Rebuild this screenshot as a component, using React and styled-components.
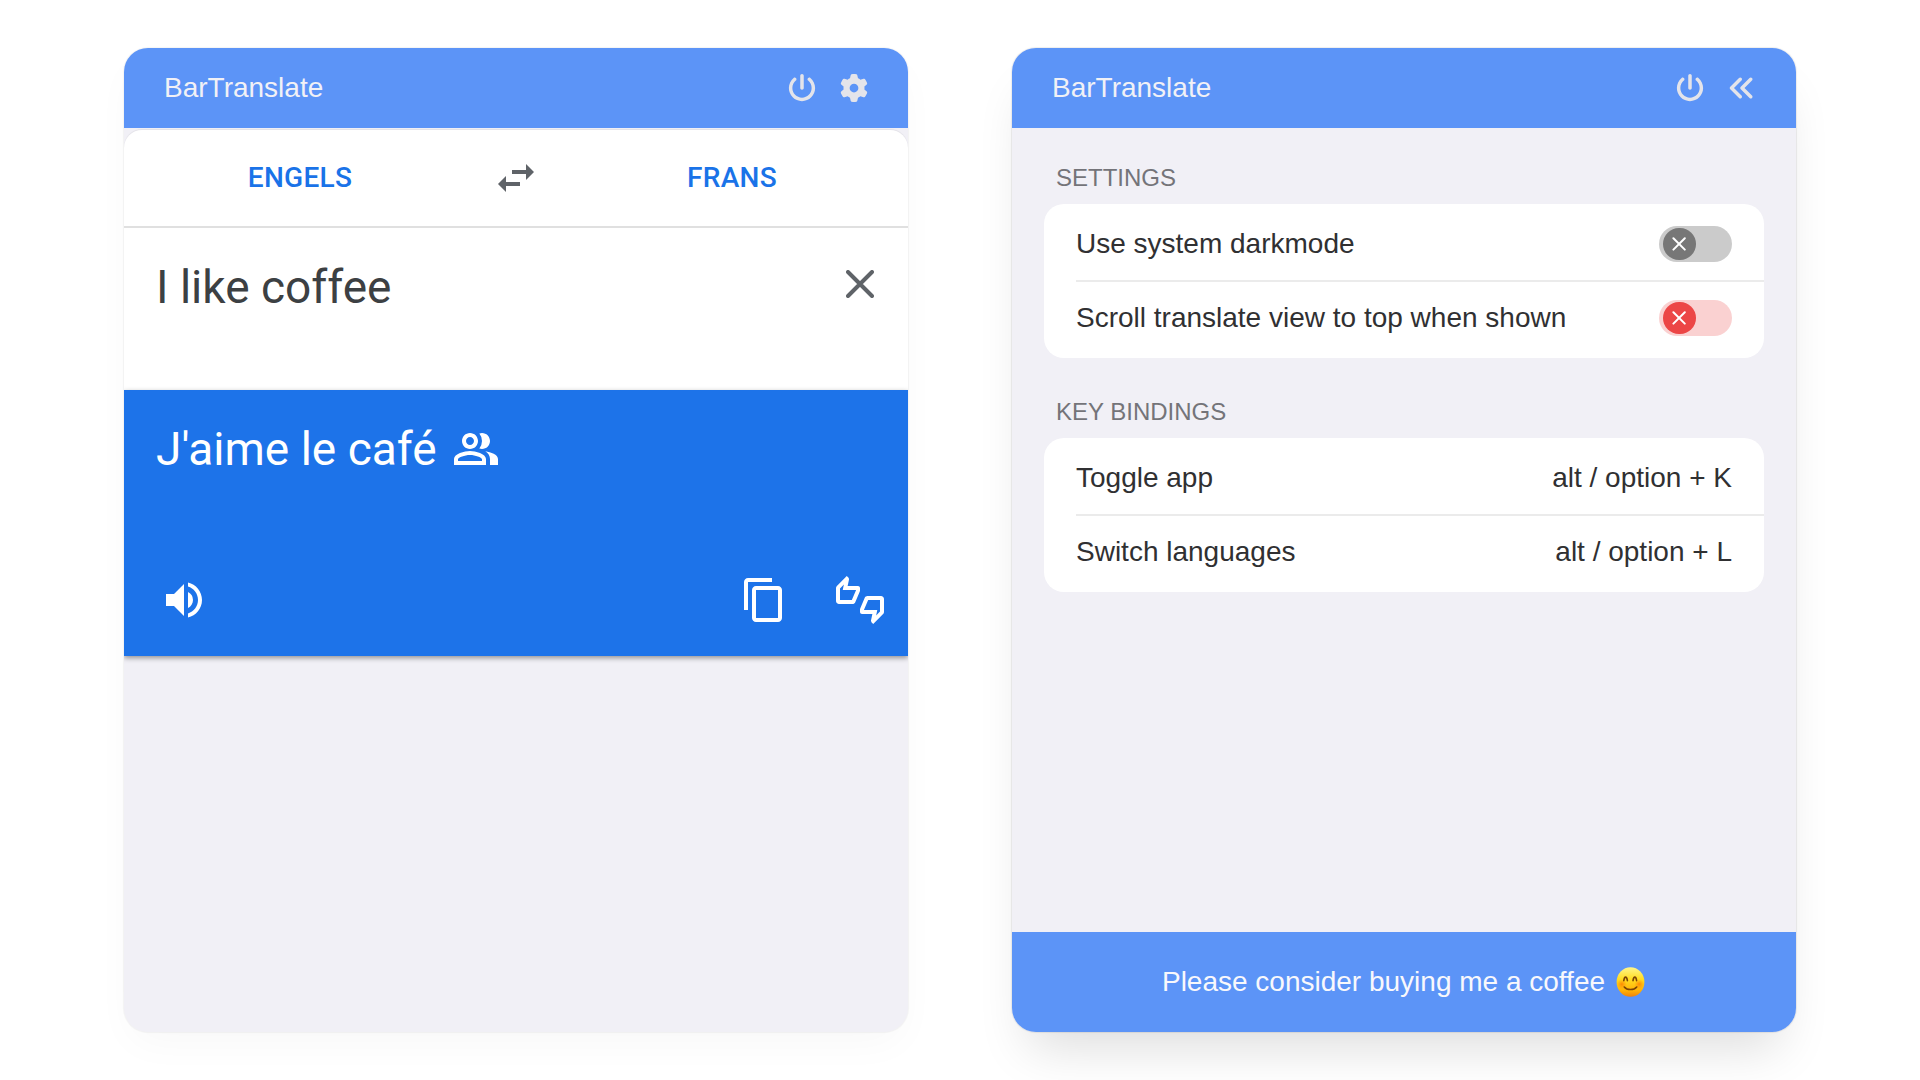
import React from "react";
import styled, { createGlobalStyle } from "styled-components";
import { FaPowerOff, FaGear, FaAnglesLeft } from "react-icons/fa6";
import {
  MdSwapHoriz,
  MdOutlinePeopleAlt,
  MdVolumeUp,
  MdContentCopy,
  MdOutlineThumbsUpDown,
} from "react-icons/md";

const GlobalStyle = createGlobalStyle`
  * { box-sizing: border-box; }
  body {
    margin: 0;
    background: #fff;
    font-family: "Liberation Sans", Arial, sans-serif;
    overflow: hidden;
  }
  svg { display: block; flex: none; }
`;

const Stage = styled.main`
  display: flex;
  gap: 104px;
  width: 1920px;
  height: 1080px;
  padding: 48px 124px;
`;

const Window = styled.section`
  display: flex;
  flex-direction: column;
  width: 784px;
  height: 984px;
  border-radius: 24px;
  overflow: hidden;
  background: #f1f0f6;
  box-shadow: ${(p) =>
    p.$raised
      ? "0 0 1px 1px rgba(0,0,0,.07), 0 32px 50px -16px rgba(0,0,0,.135)"
      : "0 0 1px 1px rgba(0,0,0,.045), 0 16px 40px -6px rgba(0,0,0,.03)"};
`;

const Header = styled.header`
  display: flex;
  align-items: center;
  justify-content: space-between;
  height: 80px;
  flex: none;
  padding: 0 40px;
  background: #5c94f7;
`;

const Title = styled.h1`
  margin: 0;
  font-size: 28px;
  font-weight: 400;
  line-height: 32px;
  color: #f1f1f6;
`;

const HeaderActions = styled.div`
  display: flex;
  align-items: center;
  gap: 24px;
  color: #e4e4ea;
`;

const Languages = styled.div`
  display: flex;
  align-items: center;
  height: 98px;
  margin-top: 2px;
  flex: none;
  background: #fff;
  border-bottom: 2px solid #e0e0e0;
  border-radius: 18px 18px 0 0;
  box-shadow: 0 -1px 1px rgba(0, 0, 0, 0.06);
  color: #5f6368;
`;

const Language = styled.div`
  flex: 1;
  padding: 0 ${(p) => (p.$end ? "0" : "16px")} 0 ${(p) => (p.$end ? "16px" : "0")};
  text-align: center;
  font: 500 28px/32px Roboto, sans-serif;
  letter-spacing: 0.3px;
  color: #1a73e8;
`;

const Source = styled.div`
  display: flex;
  justify-content: space-between;
  height: 162px;
  flex: none;
  padding: 31px 34px 0 32px;
  background: #fff;
  color: #3c4043;
  font: 400 46px/56px Roboto, sans-serif;
`;

const ClearButton = styled.div`
  margin-top: 11px;
  color: #5f6368;
`;

const Result = styled.div`
  display: flex;
  flex-direction: column;
  justify-content: space-between;
  height: 266px;
  flex: none;
  padding: 31px 24px 32px 32px;
  background: #1d73e9;
  color: #fff;
  box-shadow: 0 2px 5px rgba(0, 0, 0, 0.4);
`;

const Translation = styled.div`
  display: flex;
  align-items: center;
  gap: 15px;
  font: 400 46px/56px Roboto, sans-serif;
`;

const ResultActions = styled.div`
  display: flex;
  align-items: center;
  justify-content: space-between;
  padding-left: 4px;
`;

const ActionGroup = styled.div`
  display: flex;
  gap: 48px;
`;

const Body = styled.div`
  flex: 1;
  padding: 35px 32px 0;
`;

const Group = styled.div`
  margin-bottom: 39px;
`;

const GroupLabel = styled.h2`
  margin: 0 0 11px;
  padding-left: 12px;
  font-size: 24px;
  font-weight: 400;
  line-height: 30px;
  color: #747479;
`;

const Card = styled.div`
  padding: 4px 0 4px 32px;
  border-radius: 20px;
  background: #fff;
`;

const Row = styled.div`
  display: flex;
  align-items: center;
  justify-content: space-between;
  height: 72px;
  padding-right: 32px;
  font-size: 28px;
  line-height: 32px;
  color: #303032;

  & + & {
    height: 74px;
    border-top: 2px solid #ebebeb;
  }
`;

const Track = styled.div`
  display: flex;
  align-items: center;
  width: 73px;
  height: 36px;
  padding-left: 4px;
  border-radius: 18px;
  background: ${(p) => (p.$muted ? "#cbcbcb" : "#fad1d1")};
`;

const Knob = styled.div`
  display: flex;
  align-items: center;
  padding-left: 9px;
  width: 33px;
  height: 32px;
  border-radius: 16px;
  background: ${(p) => (p.$muted ? "#777" : "#ec4646")};
`;

const Footer = styled.footer`
  display: flex;
  align-items: center;
  justify-content: center;
  gap: 11px;
  height: 100px;
  flex: none;
  padding-right: 1px;
  background: #5c94f7;
  color: #f8f8fc;
  font-size: 28px;
  line-height: 32px;
`;

function Cross({ size, width }) {
  const near = width / 2;
  const far = size - near;
  return (
    <svg width={size} height={size} viewBox={`0 0 ${size} ${size}`} stroke="currentColor" strokeWidth={width} strokeLinecap="round">
      <path d={`M${near} ${near}L${far} ${far}M${far} ${near}L${near} ${far}`} />
    </svg>
  );
}

function Toggle({ muted }) {
  return (
    <Track $muted={muted}>
      <Knob $muted={muted}>
        <svg width="14" height="14" viewBox="0 0 14 14" stroke="#fff" strokeWidth="2" strokeLinecap="round">
          <path d="M1.4 1.2l11.4 11.4M12.8 1.2L1.4 12.6" />
        </svg>
      </Knob>
    </Track>
  );
}

function Smile() {
  return (
    <svg width="29" height="30" viewBox="0 0 29 30" fill="none">
      <defs>
        <linearGradient id="face" x1="0" y1="0" x2="0" y2="1">
          <stop offset="0" stopColor="#fff68c" />
          <stop offset=".4" stopColor="#ffdc22" />
          <stop offset=".8" stopColor="#ffb005" />
          <stop offset="1" stopColor="#ef820c" />
        </linearGradient>
        <radialGradient id="cheek">
          <stop offset="0" stopColor="#ff7a00" stopOpacity=".8" />
          <stop offset="1" stopColor="#ff8a00" stopOpacity="0" />
        </radialGradient>
      </defs>
      <ellipse cx="14.5" cy="15" rx="13.9" ry="14.7" fill="url(#face)" />
      <ellipse cx="5.8" cy="17.2" rx="5" ry="5" fill="url(#cheek)" />
      <ellipse cx="23.2" cy="17.2" rx="5" ry="5" fill="url(#cheek)" />
      <g stroke="#7a4306" strokeWidth="1.6" strokeLinecap="round">
        <path d="M7.8 13.6C8.4 8.9 10.7 8.9 11.4 13.6" />
        <path d="M17 13.6C17.7 8.9 20 8.9 20.6 13.6" />
        <path d="M8.3 20C11 23.4 18 23.4 20.7 20" />
      </g>
    </svg>
  );
}

export default function App() {
  return (
    <>
      <GlobalStyle />
      <Stage>
        <Window>
          <Header>
            <Title>BarTranslate</Title>
            <HeaderActions>
              <FaPowerOff size={28} />
              <FaGear size={28} />
            </HeaderActions>
          </Header>
          <Languages>
            <Language>ENGELS</Language>
            <MdSwapHoriz size={48} />
            <Language $end>FRANS</Language>
          </Languages>
          <Source>
            <span>I like coffee</span>
            <ClearButton>
              <Cross size={28} width={4} />
            </ClearButton>
          </Source>
          <Result>
            <Translation>
              <span>J'aime le café</span>
              <MdOutlinePeopleAlt size={48} />
            </Translation>
            <ResultActions>
              <MdVolumeUp size={48} />
              <ActionGroup>
                <MdContentCopy size={48} />
                <MdOutlineThumbsUpDown size={48} />
              </ActionGroup>
            </ResultActions>
          </Result>
        </Window>

        <Window $raised>
          <Header>
            <Title>BarTranslate</Title>
            <HeaderActions>
              <FaPowerOff size={28} />
              <FaAnglesLeft size={28} />
            </HeaderActions>
          </Header>
          <Body>
            <Group>
              <GroupLabel>SETTINGS</GroupLabel>
              <Card>
                <Row>
                  <span>Use system darkmode</span>
                  <Toggle muted />
                </Row>
                <Row>
                  <span>Scroll translate view to top when shown</span>
                  <Toggle />
                </Row>
              </Card>
            </Group>
            <Group>
              <GroupLabel>KEY BINDINGS</GroupLabel>
              <Card>
                <Row>
                  <span>Toggle app</span>
                  <span>alt / option + K</span>
                </Row>
                <Row>
                  <span>Switch languages</span>
                  <span>alt / option + L</span>
                </Row>
              </Card>
            </Group>
          </Body>
          <Footer>
            <span>Please consider buying me a coffee</span>
            <Smile />
          </Footer>
        </Window>
      </Stage>
    </>
  );
}
